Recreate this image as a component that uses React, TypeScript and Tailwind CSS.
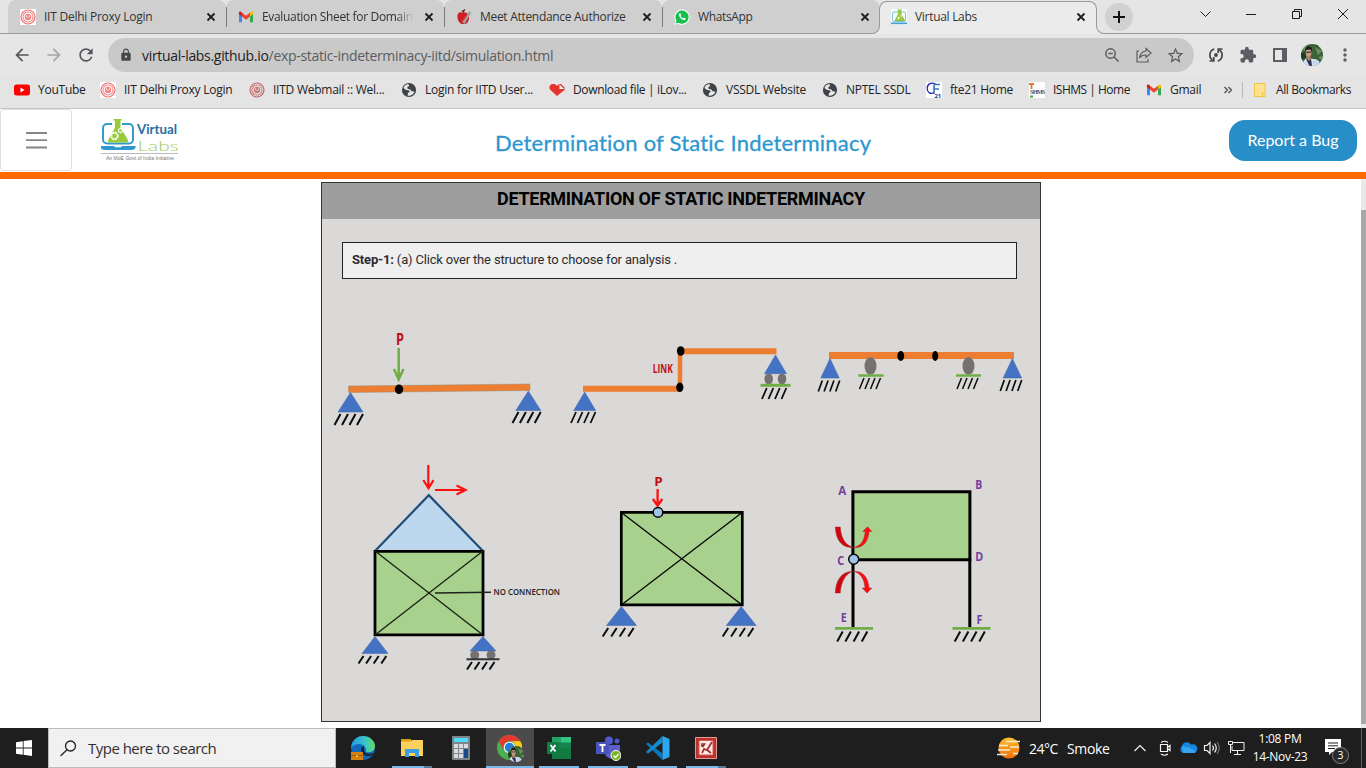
import React from "react";
import {
  MdArrowBack, MdArrowForward, MdRefresh, MdLock, MdStarBorder, MdExtension, MdMoreVert,
} from "react-icons/md";

const UI = "font-['Open_Sans','Noto_Sans',sans-serif]";

function Seal({ tone = "#f36c6c", bg = "#fff" }: { tone?: string; bg?: string }) {
  return (
    <svg width="16" height="16" viewBox="0 0 16 16" fill="none" stroke={tone}>
      <rect width="16" height="16" fill={bg} stroke="none" />
      <circle cx="8" cy="8" r="7" strokeWidth="1.2" />
      <circle cx="8" cy="8" r="5" strokeWidth="1.1" strokeDasharray="1.4 .4" />
      <circle cx="8" cy="8" r="2.8" />
      <path d="M6.3 9.4 8 6l1.7 3.4z" />
    </svg>
  );
}
function GmailIcon() {
  return (
    <svg width="16" height="16" viewBox="0 0 16 16">
      <path d="M1 4v9.3h3V6.8z" fill="#4285f4" />
      <path d="M12 6.8v6.5h3V4z" fill="#34a853" />
      <path d="M12 3.8v3.6l3.2-2.4V4.3c0-1.6-1.4-2.2-2.4-1.3z" fill="#fbbc04" />
      <path d="M4 3.8v3.6L.8 5V4.3C.8 2.700 2.200 2.100 3.200 3z" fill="#c5221f" />
      <path d="M4 3.700 8 6.800l4-3.100v3.900l-4 3.100-4-3.100z" fill="#ea4335" />
    </svg>
  );
}
function AppleIcon() {
  return (
    <svg width="16" height="16" viewBox="0 0 16 16">
      <path d="M7 4C3 2 1 5 1.500 8.500 2 13 5 16 8 14.800c3 .8 5-2.500 5-6.300C13 4 10 2.800 7 4z" fill="#cf1d22" />
      <path d="M7.500 4C7 2 8 1 9 .5" stroke="#5a2020" strokeWidth="1.300" fill="none" />
      <path d="M6 12.500 13.500 2l1.800 1.500L8.500 15z" fill="#a3a3a3" />
      <path d="m7 12 4-6" stroke="#c8464a" strokeWidth="1.200" />
      <path d="M8 3 6 1.500" stroke="#8b2320" strokeWidth="1.500" />
    </svg>
  );
}
function WhatsIcon() {
  return (
    <svg width="16" height="16" viewBox="0 0 16 16">
      <path d="M.3 15.700 1.400 11.800A7.600 7.600 0 1 1 4.300 14.700z" fill="#fff" />
      <path d="M1.500 14.500l.9-3A6.600 6.600 0 1 1 4.600 13.700z" fill="#12c04b" />
      <path d="M5.600 4.300c-1 .5-1.100 1.800-.4 3 1.100 2 2.600 3.300 4.400 3.800 1.100.3 2.200-.7 2-1.700L9.900 8.500l-.8.9C8 9 7 8 6.600 7l.7-.8-.7-1.800z" fill="#fff" />
    </svg>
  );
}
function LabIcon() {
  return (
    <svg width="16" height="16" viewBox="0 0 16 16">
      <rect width="16" height="16" fill="#f7fbfd" />
      <rect x="1.500" y="3" width="13" height="9.500" rx="1.500" fill="none" stroke="#7fc0df" />
      <path d="M6.500 1h4M7.300 1.500v4L4 11.500h9.500l-3.500-6v-4z" stroke="#8fc73e" fill="#9ccc3c" />
      <circle cx="7.500" cy="9" r="1.100" fill="#fff" /><circle cx="10" cy="7" r=".7" fill="#fff" />
      <path d="M0 13.500h16v1.700H0z" fill="#459fd0" />
    </svg>
  );
}
function GlobeIcon() {
  return (
    <svg width="16" height="16" viewBox="0 0 16 16">
      <circle cx="8" cy="8" r="7.100" fill="#3f4347" />
      <path d="M7.200 2.100C5 2.300 3 3.800 2.400 6l2.800 1.900 2.500.3 1.100 1.600-1.900 1.100-.2 2.800c2.600.5 5.800-1 6.800-4l-2.800-.4-1.500-1.700L6.500 6.800 6.300 5l2-1z" fill="#e7e7e7" />
      <path d="M2.200 7.500 5.700 10l-.5 3C3.200 12 2 10 2.200 7.500z" fill="#3f4347" />
    </svg>
  );
}
function Avatar({ size }: { size: number }) {
  return (
    <svg width={size} height={size} viewBox="0 0 22 22">
      <defs><clipPath id={"av" + size}><circle cx="11" cy="11" r="11" /></clipPath></defs>
      <g clipPath={`url(#av${size})`}>
        <rect width="22" height="22" fill="#3c6437" />
        <path d="M0 5 6 1l-2 6zM14 3l7 4-4 4zM17 13l5-1v5z" fill="#6b9161" />
        <path d="M0 9l5-1v6l-5 2zM14 0h6l-4 3z" fill="#203c25" />
        <path d="M2 22c0-5 2-8 5-8l5 1c5 0 7 2 7 7z" fill="#d5e3f5" />
        <path d="M5 15 8.500 22h2.500l-1-7z" fill="#25314f" />
        <path d="M5.500 12h4l.5 3-2 2-2.500-2z" fill="#a87e69" />
        <ellipse cx="7.500" cy="8.500" rx="2.900" ry="4.300" fill="#c39a84" />
        <path d="M4.300 8C3.500 3.500 5.500 2.200 8 2.400c3 .3 3.400 2.600 2.600 5.600l-1-2.500-4.200.3z" fill="#1b1c20" />
        <path d="M5 8.200h5" stroke="#222" strokeWidth="1" />
        <path d="M13 16.500v4M15.500 17l1 4" stroke="#9db4d3" strokeWidth=".8" />
      </g>
    </svg>
  );
}

function Close() {
  return (
    <svg className="ml-auto" width="16" height="16" viewBox="0 0 16 16" stroke="#1d1d1d" strokeWidth="1.800">
      <path d="m4.500 4.500 7 7m0-7-7 7" />
    </svg>
  );
}
function Tab({ icon, label, last, tracking, fade }: { icon: React.ReactNode; label: string; last?: boolean; tracking: string; fade?: boolean }) {
  return (
    <div className="relative flex h-[33px] w-[218px] shrink-0 items-center rounded-t-lg bg-[#cfcfcf] pl-3 pr-[7px]">
      {icon}
      <span className={`ml-2 w-[152px] overflow-hidden whitespace-nowrap text-[12px] leading-[18px] text-[#333] ${tracking} ${fade ? "[mask-image:linear-gradient(to_right,black_88%,transparent)]" : ""}`}>{label}</span>
      <Close />
      {!last && <span className="absolute -right-px top-[7px] z-10 h-[20px] w-px bg-[#7c7c7c]" />}
    </div>
  );
}

function TabStrip() {
  return (
    <div className="flex h-[34px] bg-[#e5e5e5]">
      <div className="flex w-[880px] border-b border-[#9a9a9a] pl-2">
        <Tab icon={<Seal />} label="IIT Delhi Proxy Login" tracking="tracking-[-0.25px]" />
        <Tab icon={<GmailIcon />} label="Evaluation Sheet for Domain" tracking="tracking-[-0.33px]" fade />
        <Tab icon={<AppleIcon />} label="Meet Attendance Authorize" tracking="tracking-[-0.3px]" />
        <Tab icon={<WhatsIcon />} label="WhatsApp" tracking="tracking-[-0.35px]" last />
      </div>
      <div className="relative h-[34px] w-[216px] shrink-0 bg-[#ebebeb] pt-px">
        <div className="absolute -left-[1px] top-0 h-[8px] w-[218px] bg-[#e5e5e5]" />
        <div className="absolute -left-2 bottom-0 size-2 bg-[#ebebeb]"><div className="size-2 rounded-br-lg border-b border-r border-[#9a9a9a] bg-[#cfcfcf]" /></div>
        <div className="absolute -right-2 bottom-0 size-2 bg-[#ebebeb]"><div className="size-2 rounded-bl-lg border-b border-l border-[#9a9a9a] bg-[#e5e5e5]" /></div>
        <div className="relative -ml-px flex h-[26px] w-[218px] rounded-t-lg border-x border-t border-[#9a9a9a] bg-[#ebebeb] pl-[11px] pr-[7px]">
          <div className="mt-[6px] flex h-[18px] w-full items-center">
            <LabIcon />
            <span className="ml-2 whitespace-nowrap text-[12px] tracking-[-0.3px] text-[#333]">Virtual Labs</span>
            <Close />
          </div>
        </div>
      </div>
      <div className="ml-[8px] flex flex-1 border-b border-[#9a9a9a] pl-px">
        <div className="mt-[3px] flex size-7 items-center justify-center rounded-full bg-[#d1d1d1]">
          <svg width="12" height="12" stroke="#111" strokeWidth="2"><path d="M6 0v12M0 6h12" /></svg>
        </div>
        <svg className="ml-[66px]" width="156" height="30" fill="none" stroke="#1b1b1b">
          <path d="m1.500 11.500 5 5 5-5M47 14.500h10M93.500 11.500h7v7h-7zM95.500 11V9.500h7v7h-1.500M139 9l10 10m0-10-10 10" />
        </svg>
      </div>
    </div>
  );
}

function Toolbar() {
  return (
    <div className="flex h-[42px] items-center bg-[#e6e6e6]">
      <div className="flex w-[108px] items-center gap-3 pl-3 text-[20px] text-[#54585c]">
        <MdArrowBack /><MdArrowForward className="text-[#a6a6a6]" /><MdRefresh />
      </div>
      <div className="flex h-[34px] w-[1086px] items-center rounded-full bg-[#c9c9c9] pl-[11px] pr-[9px] text-[#5a5d61]">
        <MdLock className="text-[14px] text-[#44474b]" />
        <span className="ml-[9px] whitespace-nowrap text-[14px] tracking-[-0.31px] text-[#5a5d61]">
          <span className="text-[#222]">virtual-labs.github.io</span>/exp-static-indeterminacy-iitd/simulation.html
        </span>
        <svg className="ml-auto" width="18" height="18" viewBox="0 0 18 18" fill="none" stroke="currentColor" strokeWidth="1.500"><circle cx="7.500" cy="7.500" r="4.700" /><path d="m11 11 4.500 4.500M5.300 7.500h4.400" /></svg>
        <svg className="ml-[14px]" width="18" height="18" viewBox="0 0 18 18" fill="none" stroke="currentColor" strokeWidth="1.200"><path d="M4 5H2v11h11v-3M11 2.500 16 7l-5 4.500V9C8 8.800 6 9.800 4.500 12 5 7.500 7.500 5.500 11 5z" /></svg>
        <MdStarBorder className="ml-[13px] text-[19px]" />
      </div>
      <div className="flex flex-1 items-center text-[#5a5d61]">
        <svg className="ml-[13px]" width="18" height="18" viewBox="0 0 18 18" fill="none" stroke="#43474b" strokeWidth="1.700">
          <path d="M7.300 3A6.200 6.200 0 0 0 5.500 14M2.500 15h4.300v-4M10.700 15A6.200 6.200 0 0 0 12.500 4M15.500 3h-4.300v4" /><circle cx="9" cy="9" r="1.900" fill="#43474b" stroke="none" />
        </svg>
        <MdExtension className="ml-[14px] text-[18px]" />
        <svg className="ml-[16px]" width="14" height="14" fill="none" stroke="currentColor" strokeWidth="2"><rect x="1" y="1" width="12" height="12" /><path d="M9 0h5v14H9z" fill="currentColor" stroke="none" /></svg>
        <div className="ml-[14px]"><Avatar size={22} /></div>
        <MdMoreVert className="ml-[12px] text-[20px]" />
      </div>
    </div>
  );
}

function Mark({ icon, label, className = "" }: { icon: React.ReactNode; label: string; className?: string }) {
  return <div className={`flex shrink-0 items-center gap-2 whitespace-nowrap ${className}`}>{icon}<span>{label}</span></div>;
}
function Bookmarks() {
  return (
    <div className="flex h-[33px] items-center border-b border-[#c4c4c4] bg-[#e4e4e4] pb-[5px] pl-[14px] text-[12px] tracking-[-0.25px] text-[#202124]">
      <Mark className="w-[86px]" label="YouTube" icon={<svg width="16" height="16"><rect y="2.500" width="16" height="11" rx="2.500" fill="#f00" /><path d="m6.500 5.500 4 2.500-4 2.500z" fill="#fff" /></svg>} />
      <Mark className="w-[149px]" label="IIT Delhi Proxy Login" icon={<Seal />} />
      <Mark className="w-[152px]" label="IITD Webmail :: Wel..." icon={<Seal tone="#c26a68" bg="none" />} />
      <Mark className="w-[148px]" label="Login for IITD User..." icon={<GlobeIcon />} />
      <Mark className="w-[153px] tracking-[-0.35px]" label="Download file | iLov..." icon={<svg width="16" height="16"><path d="M8 14 1 7.500C-.5 5 1 2 4 2c2 0 3 .6 4 2 1-1.500 2.500-2 4-2l3.500 3.500V8L11 11.500z" fill="#e5322d" /><path d="M10.500 2.500V7H15z" fill="#fff" /></svg>} />
      <Mark className="w-[120px]" label="VSSDL Website" icon={<GlobeIcon />} />
      <Mark className="w-[104px]" label="NPTEL SSDL" icon={<GlobeIcon />} />
      <Mark className="w-[103px] tracking-[-0.28px]" label="fte21 Home" icon={<svg width="16" height="16"><path d="M0 0h16v16H0z" fill="#fff" /><path d="M10 2.500C7 0 1.500 1 1.200 6S5 12.500 8 10.500" fill="none" stroke="#2224bd" strokeWidth="1.300" /><path d="M8 12V3.500q0-1 1-1h5M8 7h5" fill="none" stroke="#3674c8" strokeWidth="1.600" /><text x="8.500" y="15.500" fontSize="6" fontWeight="bold" fill="#28299b">21</text></svg>} />
      <Mark className="w-[117px] tracking-[-0.5px]" label="ISHMS | Home" icon={<svg width="16" height="16"><path d="M0 0h16v16H0z" fill="#fff" /><path d="M0 2h5M2.500 2v5" stroke="#e07734" strokeWidth="1.800" /><text x="1" y="11.500" fontFamily="Liberation Serif" fontWeight="bold" fontSize="6.500" textLength="15" fill="#46536b">SHMS</text><path d="M1 14.500h3" stroke="#4f9a4b" strokeWidth="2" /></svg>} />
      <Mark className="w-[78px]" label="Gmail" icon={<GmailIcon />} />
      <svg width="8" height="8" fill="none" stroke="#555" strokeWidth="1.400"><path d="m.5 1 3 3-3 3m4-6 3 3-3 3" /></svg>
      <span className="ml-[10px] h-4 w-px bg-[#b9b9b9]" />
      <svg className="ml-[10px]" width="14" height="16"><path d="M1.500 1.500h10.500v13H1.500z" fill="#fde293" stroke="#f2c443" /><path d="M9.500 14.500v-4H12" fill="none" stroke="#f2c443" /></svg>
      <span className="ml-[9px] whitespace-nowrap tracking-[-0.38px]">All Bookmarks</span>
    </div>
  );
}

function Logo() {
  return (
    <svg width="80" height="46" viewBox="100 117 80 46">
      <rect x="103" y="124" width="30" height="19.500" rx="4" fill="none" stroke="#359bcf" strokeWidth="2" />
      <path d="M112 118h10v7h-10z" fill="#fff" />
      <path d="M115 120h5.500v7.500L128 140q.7 2.500-2 2.500h-16q-3-.5-1.500-3l6.500-12z" fill="#98cb3b" />
      <path d="M113.500 119.800h8" stroke="#98cb3b" strokeWidth="1.600" />
      <circle cx="114.500" cy="136" r="3.200" fill="none" stroke="#fff" strokeWidth="2" strokeDasharray="2 .5" />
      <circle cx="120.500" cy="130.500" r="2" fill="none" stroke="#fff" strokeWidth="1.500" strokeDasharray="1.500 .4" />
      <path d="M101 146h34.500v2q-1 2-4 2H105q-4-.5-4-2z" fill="#2e98ce" />
      <path d="M114 146h8l-1 1.300h-6z" fill="#fff" />
      <text x="137" y="134" fontFamily="Lato" fontWeight="700" fontSize="13.500" textLength="40" lengthAdjust="spacingAndGlyphs" fill="#24709f">Virtual</text>
      <text x="137.500" y="150.500" fontFamily="Lato" fontWeight="300" fontSize="13.500" textLength="41" lengthAdjust="spacingAndGlyphs" fill="#a1cc50">Labs</text>
      <path d="M101 153.500h77" stroke="#aaa" strokeWidth=".8" />
      <text x="106" y="160" fontFamily="Liberation Sans" fontSize="5.500" textLength="68" lengthAdjust="spacingAndGlyphs" fill="#777">An MoE Govt of India Initiative</text>
    </svg>
  );
}
function Header() {
  return (
    <header className="flex h-[70px] shrink-0 items-start border-b-[7px] border-[#ff6a00] bg-white">
      <div className="flex h-[62px] w-[72px] items-center justify-center rounded border border-[#dedede]">
        <svg width="22" height="18" stroke="#868686" strokeWidth="1.800" className="translate-x-[0.5px]"><path d="M.5 2h21M.5 9.200h21M.5 16.500h21" /></svg>
      </div>
      <div className="ml-[28px] mt-[8px]"><Logo /></div>
      <h1 className="ml-[315px] mt-[19px] w-[378px] whitespace-nowrap font-['Lato',sans-serif] text-[22px] font-normal leading-[30px] tracking-[0.22px] text-[#2c97cf] [-webkit-text-stroke:0.3px_#2c97cf]">Determination of Static Indeterminacy</h1>
      <button className="ml-auto mr-[9px] mt-[11px] h-[41px] w-[128px] rounded-[16px] bg-[#288ec8] pb-[2px] font-['Lato',sans-serif] text-[16px] text-white">Report a Bug</button>
    </header>
  );
}

/* ---- structure drawings ---- */
function Pin({ x, y, w, h }: { x: number; y: number; w: number; h: number }) {
  return <path d={`M${x} ${y}l${w / 2} ${h}h${-w}z`} fill="#4472c4" stroke="#3b62a8" strokeWidth=".5" />;
}
function Hatch({ x, y, step, h = 11, dx = 6, sw = 1.8 }: { x: number; y: number; step: number; h?: number; dx?: number; sw?: number }) {
  return <path d={[0, 1, 2, 3].map((i) => `M${x + i * step} ${y + h}l${dx} ${-h}`).join("")} stroke="#0c0c0c" strokeWidth={sw} />;
}
function Figure({ box, w, h, children }: { box: string; w: number; h: number; children: React.ReactNode }) {
  return <svg className="block cursor-pointer" width={w} height={h} viewBox={box} fill="none">{children}</svg>;
}
const label = { fontFamily: "Open Sans, sans-serif", fontWeight: 700 };
const joints: [string, number, number, number][] = [
  ["A", 838.3, 494.7, 8], ["B", 975.3, 488.500, 7], ["C", 837.3, 565, 7],
  ["D", 975.3, 561.300, 8], ["E", 840.8, 621.500, 6], ["F", 976.500, 623.700, 6],
];

function Structures() {
  return (
    <div className="mt-[41px] grid grid-cols-[238px_240px_240px]">
      <Figure box="322 320 238 130" w={238} h={130}>
        <text x="396" y="344.500" {...label} fontSize="15.500" textLength="8" lengthAdjust="spacingAndGlyphs" fill="#c00f14">P</text>
        <path d="M398.700 348v31" stroke="#70ad47" strokeWidth="2.500" /><path d="m394 369 4.700 10.500 4.800-10.500" stroke="#70ad47" strokeWidth="2.500" />
        <path d="M348.500 386 530 384v6.500l-181.500 2z" fill="#ed7d31" stroke="#9b8a74" strokeWidth=".5" />
        <ellipse cx="399" cy="389.300" rx="4.200" ry="4.800" fill="#000" />
        <Pin x={350.500} y={392.500} w={25} h={19.500} /><Pin x={528.300} y={391} w={25} h={19.500} />
        <Hatch x={334.500} y={414} step={7.500} sw={2} /><Hatch x={512.500} y={412} step={7.400} sw={2} />
      </Figure>
      <Figure box="560 320 240 130" w={240} h={130}>
        <text x="652.800" y="372.500" {...label} fontSize="13" textLength="20" lengthAdjust="spacingAndGlyphs" fill="#c00f14">LINK</text>
        <path d="M583 388.700h97M680 351.200h96.500" stroke="#ed7d31" strokeWidth="6" />
        <path d="M680 351v36" stroke="#ed7d31" strokeWidth="4.500" />
        <ellipse cx="680.700" cy="351" rx="3.800" ry="4.800" fill="#000" /><ellipse cx="679.800" cy="387.300" rx="3.600" ry="4.800" fill="#000" />
        <Pin x={584.700} y={392} w={22} h={18.500} /><Pin x={775.500} y={355} w={22} h={18.700} />
        <ellipse cx="768.700" cy="379" rx="4.300" ry="5.500" fill="#767171" /><ellipse cx="782" cy="379" rx="4.300" ry="5.500" fill="#767171" />
        <path d="M760.500 385.300h30" stroke="#70ad47" strokeWidth="3" />
        <Hatch x={571} y={412} step={6.500} dx={5} /><Hatch x={762} y={388} step={6.500} dx={4.800} />
      </Figure>
      <Figure box="800 320 240 130" w={240} h={130}>
        <path d="M829 355.500h185" stroke="#ed7d31" strokeWidth="7" />
        <ellipse cx="900.800" cy="356" rx="3.400" ry="5" fill="#000" /><ellipse cx="935.200" cy="356" rx="3" ry="5" fill="#000" />
        <Pin x={830} y={358.500} w={18.500} h={19.500} /><Pin x={1012.400} y={358.500} w={18.500} h={19.500} />
        <ellipse cx="870.500" cy="366" rx="6" ry="9" fill="#767171" /><ellipse cx="968.500" cy="366" rx="6" ry="9" fill="#767171" />
        <path d="M858.300 375.500h25.300M956 375.500h25" stroke="#70ad47" strokeWidth="2.500" />
        <Hatch x={818.300} y={380.500} step={5.800} dx={4} sw={1.700} /><Hatch x={1000.300} y={380} step={5.800} dx={4} sw={1.700} />
        <Hatch x={859.500} y={378} step={5.500} dx={4.500} sw={1.500} /><Hatch x={957} y={378} step={5.500} dx={4.500} sw={1.500} />
      </Figure>
      <Figure box="322 450 260 230" w={260} h={230}>
        <path d="M428.300 465v23m-5-8 5.200 8.200 5-8M435 490h30m-8.500-4.500 9 4.500-9 4.500" stroke="#ff1010" strokeWidth="2.200" />
        <path d="m375 551 53.800-55.800L483 551" fill="#bdd7ee" stroke="#1f4e79" strokeWidth="2.200" />
        <path d="M375 551.300h108v83.500H375z" fill="#a9d18e" stroke="#000" strokeWidth="2.800" />
        <path d="m375 551 108 84M483 551l-108 84M435 593l56-.7" stroke="#1c2518" strokeWidth="1.400" />
        <text x="493.500" y="595" {...label} fontWeight={600} fontSize="8" textLength="66.500" lengthAdjust="spacingAndGlyphs" fill="#222">NO CONNECTION</text>
        <Pin x={375} y={636.500} w={26} h={17} /><Pin x={483} y={636.500} w={26} h={14.500} />
        <circle cx="474.700" cy="655" r="4.500" fill="#767171" /><circle cx="491" cy="655" r="4.500" fill="#767171" />
        <path d="M466.500 659.300h33" stroke="#333" strokeWidth="2" />
        <Hatch x={358.500} y={656} step={7.600} h={7.500} dx={5} sw={2} /><Hatch x={467} y={662} step={7.500} h={7.500} dx={5} sw={2} />
      </Figure>
      <div className="pl-[22px]">
        <Figure box="582 450 218 230" w={218} h={230}>
          <text x="654.300" y="485.500" {...label} fontSize="12.500" textLength="8.500" lengthAdjust="spacingAndGlyphs" fill="#c00f14">P</text>
          <path d="M657.600 489v16m-4.700-6 4.700 6.700 4.700-6.700" stroke="#ff1010" strokeWidth="2.300" />
          <path d="M621.300 512.300h121v92.500h-121z" fill="#a9d18e" stroke="#000" strokeWidth="2.700" />
          <path d="m622 513 119.500 91.500M741.500 513 622 604.500" stroke="#080808" strokeWidth="1.400" />
          <circle cx="658" cy="512.400" r="4.800" fill="#9dc3e6" stroke="#050505" strokeWidth="1.500" />
          <Pin x={621.500} y={606.500} w={30} h={19} /><Pin x={741.200} y={606.500} w={30} h={19} />
          <Hatch x={602.700} y={628} step={8.500} h={8.500} dx={5.500} sw={2} /><Hatch x={722.700} y={628} step={8.400} h={8.500} dx={5.500} sw={2} />
        </Figure>
      </div>
      <Figure box="800 450 240 230" w={240} h={230}>
        <path d="M852.900 491.700h117v68h-117z" fill="#a9d18e" stroke="#000" strokeWidth="3" />
        <path d="M853 559v68M969.800 559v68" stroke="#000" strokeWidth="3" />
        <path d="M835.300 527h5c.6 11 5.200 18.500 13 20.200-10.500 1.500-17.300-6-18-20.200zM835.300 593h5c.4-10 5.200-20.500 13-21.500-10.800-1.200-17.800 8.500-18 21.500z" fill="#d0080e" stroke="#842b33" strokeWidth=".4" />
        <path d="M853 547.300c7-.5 11.500-6 12.200-15.800h-2.500l4.900-4.700 4.200 4.700H869c-.7 10-6 17.500-16 15.800zM853 571.500c9.500-1 15 5 16 16.500h2.800l-4.700 5-4.900-5h2.800c-.6-9.500-5-16-12-16.500z" fill="#ff0c0c" stroke="#9a2931" strokeWidth=".5" />
        <circle cx="853.700" cy="559.300" r="5" fill="#9dc3e6" stroke="#080808" strokeWidth="1.500" />
        {joints.map(([t, x, y, w]) => (
          <text key={t} x={x} y={y} {...label} fontSize="11.800" fill="#7440a0" textLength={w} lengthAdjust="spacingAndGlyphs">{t}</text>
        ))}
        <path d="M835 628.400h38M952.500 628.400h38" stroke="#70ad47" strokeWidth="2.800" />
        <Hatch x={837.200} y={631.500} step={8.200} h={10} dx={5.500} sw={2} /><Hatch x={954.700} y={631.500} step={8.200} h={10} dx={5.500} sw={2} />
      </Figure>
    </div>
  );
}

function Simulation() {
  return (
    <main className="flex h-[549px] bg-white pl-[321px]">
      <section className="mt-[3px] h-[540px] w-[720px] border border-[#333] bg-[#dad9d7] font-['Roboto',sans-serif]">
        <h2 className="h-[36px] bg-[#9e9e9e] pt-[2px] text-center text-[18px] font-bold leading-[27px] tracking-[-0.3px] text-black">DETERMINATION OF STATIC INDETERMINACY</h2>
        <p className="ml-[20px] mt-[23px] h-[37px] w-[675px] border border-[#222] bg-[#f0eff0] pl-[9px] text-[13px] leading-[34px] tracking-[-0.17px] text-[#2c2c2c]"><b>Step-1:</b> (a) Click over the structure to choose for analysis .</p>
        <Structures />
      </section>
      <div className="ml-auto w-[5px] bg-[#e9e9e9] pt-[31px]"><div className="h-[514px] bg-[#a8a8a8]" /></div>
    </main>
  );
}

function TaskButton({ children, run, active, tail }: { children: React.ReactNode; run?: boolean; active?: boolean; tail?: boolean }) {
  return (
    <div className={`relative flex h-10 w-12 shrink-0 items-center justify-center ${active ? "bg-[#4b4b4b]" : ""}`}>
      {children}
      {run && <span className={`absolute bottom-0 h-[2px] bg-[#76b9ed] ${active ? "w-12" : "w-10"}`} />}
      {tail && <span className="absolute bottom-0 right-1 h-[2px] w-2 bg-[#527a9b]" />}
    </div>
  );
}
function Taskbar() {
  return (
    <footer className="flex h-10 bg-[#1e1e1e] text-white">
      <div className="flex w-12 items-center justify-center"><svg width="16" height="16" fill="#fff"><path d="M0 2.200 6.800 1.200v6.400H0zM7.600 1.100 16 0v7.600H7.600zM0 8.400h6.800v6.400L0 13.800zM7.600 8.400H16V16l-8.400-1.200z" /></svg></div>
      <div className="flex w-[288px] items-center border border-[#bcbcbc] bg-[#f1f1f1] pl-[11px] text-[#303030]">
        <svg width="17" height="17" fill="none" stroke="#222" strokeWidth="1.300"><circle cx="10.500" cy="6" r="5" /><path d="M7 9.800.5 16" /></svg>
        <span className="ml-[11px] whitespace-nowrap text-[15px] tracking-[-0.52px]">Type here to search</span>
      </div>
      <div className="flex pl-[3px]">
        <TaskButton><svg width="26" height="26" viewBox="0 0 26 26">
          <defs><linearGradient id="edge"><stop stopColor="#219be5" /><stop offset=".6" stopColor="#39c5c5" /><stop offset="1" stopColor="#62dc63" /></linearGradient></defs>
          <circle cx="13" cy="13" r="12" fill="#1367bb" /><path d="M1 13C2 4 8 1 13 1c7 0 12 5 12 10 0 6-6 7-9 6 1-8-9-11-15-4z" fill="url(#edge)" />
          <path d="M14 11c-5 2-3 9 3 10 3 .5 6-1 7.500-3-3 1-10 2-10.500-3z" fill="#17242e" />
          <rect x="1" y="17" width="12" height="8" fill="#d58110" /><path d="M1 20.500h12" stroke="#9d5905" /><circle cx="7" cy="21" r="1" fill="#ffd84d" />
        </svg></TaskButton>
        <div className="ml-px"><TaskButton run tail><svg width="24" height="22" viewBox="0 0 24 22"><path d="M1 2h10v4H1z" fill="#dba117" /><path d="M1 4.500h9L12 3h11v16H1z" fill="#fdcf5b" /><path d="M5 12h14v8h-4v-4H9v4H5z" fill="#3b9fe2" /></svg></TaskButton></div>
        <div className="ml-px"><TaskButton><svg width="18" height="24" viewBox="0 0 18 24"><rect width="18" height="24" rx="1" fill="#7e8487" /><path d="M2 2h14v4H2z" fill="#4cdcf8" /><g fill="#d9dde1"><path d="M2 8h4v4H2zM7 8h4v4H7zM12 8h4v4h-4zM2 13h4v4H2zM7 13h4v4H7zM2 18h4v4H2zM7 18h4v4H7z" /></g><path d="M12 13h4v9h-4z" fill="#164b87" /></svg></TaskButton></div>
        <div className="ml-px mr-px"><TaskButton run active><div className="relative size-[26px]">
          <svg width="25" height="25" viewBox="0 0 24 24"><circle cx="12" cy="12" r="12" fill="#4caf50" /><path d="M1.600 6A12 12 0 0 1 22.400 6H12a6 6 0 0 0-5.200 9z" fill="#e53a30" /><path d="M22.400 6A12 12 0 0 1 12 24l5.200-9A6 6 0 0 0 12 6z" fill="#fdc91c" /><circle cx="12" cy="12" r="5.500" fill="#fff" /><circle cx="12" cy="12" r="4.500" fill="#267cdd" /></svg>
          <div className="absolute -bottom-px -right-px"><Avatar size={16} /></div></div></TaskButton></div>
        <TaskButton run><svg width="24" height="22" viewBox="0 0 24 22"><path d="M5 0h10v22H5z" fill="#21a366" /><path d="M14 0h10v11H14z" fill="#33c481" /><path d="M5 11h19v11H5z" fill="#107c41" /><path d="M5 5.500h19V11H5z" fill="#15834d" /><path d="M0 5h12v12H0z" fill="#107c41" /><path d="m3.500 8 5 6.500m0-6.500-5 6.500" stroke="#fff" strokeWidth="1.800" /></svg></TaskButton>
        <div className="ml-px"><TaskButton run><svg width="25" height="25" viewBox="0 0 25 25"><circle cx="13" cy="4.500" r="4" fill="#5059c9" /><circle cx="21" cy="5" r="2.500" fill="#5059c9" /><path d="M8 9h16v7c0 8-13 9-15 2z" fill="#5b5fc7" /><path d="M0 6h13v12H0z" fill="#4b53bc" /><path d="M3.500 9h6M6.500 9v7" stroke="#fff" strokeWidth="1.800" /><circle cx="20" cy="19.500" r="5" fill="#78b71c" stroke="#fff" /><path d="m17.500 19.500 2 2 3.200-3.500" stroke="#fff" fill="none" strokeWidth="1.500" /></svg></TaskButton></div>
        <div className="ml-px"><TaskButton run><svg width="25" height="24" viewBox="0 0 25 24"><path d="m1 8 2-1.500L17.500 17.500V24z" fill="#0a75b8" /><path d="M1 16 17.500 0v6.500L3 17.500z" fill="#168ace" /><path d="m17.500 0 7 3v18l-7 3z" fill="#2ea7f2" /></svg></TaskButton></div>
        <div className="ml-px"><TaskButton run tail><svg width="22" height="22" viewBox="0 0 22 22"><path d="M.5.500h21v21H.5z" fill="#b9302d" stroke="#e69b94" /><path d="M4 3.500h14v14.500H4z" fill="#fbe9e5" stroke="#d75950" /><path d="M6 7h3.500L8 9.500l-2-1M7 16l2-4 3 1 5-8m-5 8 4 3" fill="none" stroke="#a52a29" strokeWidth="1.700" /></svg></TaskButton></div>
      </div>
      <div className="ml-auto flex items-center">
        <svg width="24" height="22" viewBox="0 0 24 22"><defs><linearGradient id="sun" x2="0" y2="1"><stop stopColor="#ffc32d" /><stop offset="1" stopColor="#f26a0d" /></linearGradient></defs><circle cx="12" cy="11" r="10.500" fill="url(#sun)" /><path d="M9 4.500h14M2 8.500h9m2 1.500h9M1 13h12m3 3.500h5M0 17.500h10" stroke="#f6ead6" strokeWidth="1.700" /></svg>
        <span className="ml-[8px] w-[38px] whitespace-nowrap text-[14px] tracking-[-0.5px]">24°C</span><span className="w-[67px] whitespace-nowrap text-[14px] tracking-[-0.35px]">Smoke</span>
        <svg width="102" height="20" fill="none" stroke="#f2f2f2" strokeWidth="1.200">
          <path d="m.5 13 5.500-5.500 5.500 5.500M26.500 6.500h7v7h-7zM34 9l2-1.500v5L34 11M27 4.500q3.500-2.500 7 0M27 16q3.500 2.500 7 0" />
          <path d="M49 15a4 4 0 0 1-1-7 5 5 0 0 1 9-1.500 4 4 0 0 1 3.500 8.500z" fill="#1686de" stroke="none" /><path d="m48 8 7 1.500 7 4-1.500 1.500H49z" fill="#34a5ee" stroke="none" />
          <path d="M70.500 7.500h2.500l3-3v11l-3-3h-2.500zM78.500 7.500q2 2.500 0 5m2-7q3.500 4.500 0 9" /><path d="M83 4q4.500 6 0 12" stroke="#707070" />
        </svg>
        <svg width="17" height="16" fill="none" stroke="#eee" className="-ml-[8px] mr-[-2px]"><path d="M5 2.500h11v8H4V6M9.500 10.500v4M6 14.500h7M.5 1.500h4v3h-4zM2.500 5v8" /></svg>
        <div className="ml-[8px] w-[58px] text-center text-[12px] leading-[18px] tracking-[-0.3px]"><div>1:08 PM</div><div className="whitespace-nowrap">14-Nov-23</div></div>
        <div className="relative ml-[16px] mr-[11px] h-[30px] w-[25px] pt-[6px]">
          <svg width="17" height="17"><path d="M0 0h16v13H7l-3 3v-3H0z" fill="#fff" /><path d="M3 4h10M3 6.800h10M3 9.500h7" stroke="#222" /></svg>
          <span className="absolute bottom-[-1px] right-px flex size-[17px] items-center justify-center rounded-full border border-[#888] bg-[#292929] text-[11px]">3</span>
        </div>
        <span className="mr-1 h-10 w-px bg-[#606060]" />
      </div>
    </footer>
  );
}

export default function App() {
  return (
    <div className={`flex h-[768px] w-[1366px] flex-col overflow-hidden bg-white ${UI}`}>
      <TabStrip />
      <Toolbar />
      <Bookmarks />
      <Header />
      <Simulation />
      <Taskbar />
    </div>
  );
}
